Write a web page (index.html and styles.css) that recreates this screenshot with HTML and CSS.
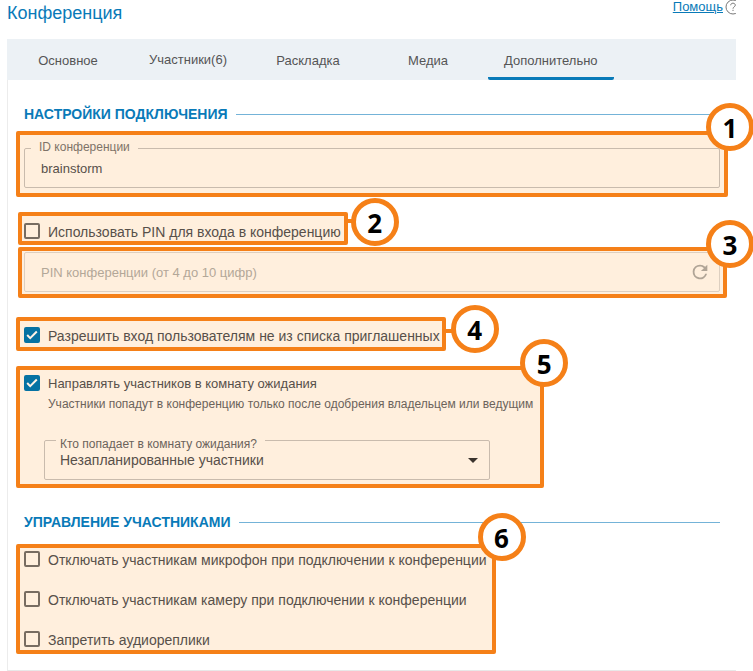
FILE: index.html
```html
<!DOCTYPE html>
<html lang="ru">
<head>
<meta charset="utf-8">
<meta name="viewport" content="width=device-width, initial-scale=1">
<title>Конференция</title>
<link rel="stylesheet" href="styles.css">
</head>
<body>
<div class="page">
  <header class="header">
    <h1 class="title">Конференция</h1>
    <div class="help">
      <a href="#help">Помощь</a>
      <span class="help-clip"><svg class="help-icon" viewBox="0 0 16 16" aria-hidden="true"><circle cx="8" cy="7" r="7"/><path d="M5.700 5.300C5.700 3.900 6.700 3.200 8 3.200s2.300.8 2.300 2C10.300 6.800 8 6.900 8 8.700M8 9.800V11"/></svg></span>
    </div>
  </header>

  <nav class="tabs">
    <button type="button" class="tab">Основное</button>
    <button type="button" class="tab tab-count">Участники(6)</button>
    <button type="button" class="tab">Раскладка</button>
    <button type="button" class="tab">Медиа</button>
    <button type="button" class="tab active">Дополнительно</button>
  </nav>

  <main class="panel">
    <h2 class="section first">НАСТРОЙКИ ПОДКЛЮЧЕНИЯ</h2>

    <div class="callout id-box">
      <fieldset class="field">
        <legend><label for="conf-id">ID конференции</label></legend>
        <input id="conf-id" class="text" type="text" value="brainstorm">
      </fieldset>
      <span class="badge">1</span>
    </div>

    <div class="callout pin-toggle linked">
      <label class="check"><input type="checkbox"><span>Использовать PIN для входа в конференцию</span></label>
      <span class="badge">2</span>
    </div>

    <div class="callout pin-box">
      <div class="pin-field">
        <input class="text" type="text" aria-label="PIN конференции" placeholder="PIN конференции (от 4 до 10 цифр)">
        <button type="button" class="refresh" aria-label="Обновить PIN"><svg viewBox="0 0 24 24" aria-hidden="true"><path d="M17.650 6.350A7.960 7.960 0 0 0 12 4a8 8 0 1 0 7.730 10h-2.080A6 6 0 1 1 12 6c1.660 0 3.140.690 4.220 1.780L13 11h7V4z"/></svg></button>
      </div>
      <span class="badge">3</span>
    </div>

    <div class="callout guests linked">
      <label class="check"><input type="checkbox" checked><span>Разрешить вход пользователям не из списка приглашенных</span></label>
      <span class="badge">4</span>
    </div>

    <div class="callout waiting">
      <label class="check small"><input type="checkbox" checked><span>Направлять участников в комнату ожидания</span></label>
      <p class="hint">Участники попадут в конференцию только после одобрения владельцем или ведущим</p>
      <fieldset class="field select-field">
        <legend><label for="who">Кто попадает в комнату ожидания?</label></legend>
        <select id="who"><option>Незапланированные участники</option></select>
        <svg class="arrow" viewBox="0 0 10 5" aria-hidden="true"><path d="M0 0h10L5 5z"/></svg>
      </fieldset>
      <span class="badge">5</span>
    </div>

    <h2 class="section second">УПРАВЛЕНИЕ УЧАСТНИКАМИ</h2>

    <div class="callout control">
      <label class="check"><input type="checkbox"><span>Отключать участникам микрофон при подключении к конференции</span></label>
      <label class="check"><input type="checkbox"><span>Отключать участникам камеру при подключении к конференции</span></label>
      <label class="check"><input type="checkbox"><span>Запретить аудиореплики</span></label>
      <span class="badge">6</span>
    </div>
  </main>
</div>
</body>
</html>
```
FILE: styles.css
```css
* { box-sizing: border-box; }

:root {
  --blue: #097ab8;
  --orange: #f58018;
  --tint: #ffefdd;
  --ink: #57504a;
  --muted: #6b635b;
  --line: #c9bbad;
}

body {
  margin: 0;
  background: #fff;
  color: var(--ink);
  font: 14px/20px "Liberation Sans", Arial, sans-serif;
  overflow-x: hidden;
}

button, input, select { font: inherit; color: inherit; }

.page { margin: 0 17px 0 7px; }

.header {
  display: flex;
  justify-content: space-between;
  align-items: flex-start;
  height: 39px;
}

.title {
  margin: 0;
  padding-top: 3px;
  color: var(--blue);
  font-size: 18px;
  font-weight: 400;
  line-height: 20px;
}

.help {
  display: flex;
  gap: 2px;
  font-size: 13px;
  line-height: 14px;
}

.help a { color: var(--blue); }

.help-clip { width: 11px; height: 16px; overflow: hidden; }

.help-icon {
  display: block;
  width: 16px;
  height: 16px;
  fill: none;
  stroke: #777;
}

.tabs {
  display: flex;
  height: 41px;
  padding-left: 1px;
  background: #ecf1f5;
}

.tab {
  min-width: 120px;
  padding: 5px 16px 0;
  border: 0;
  border-bottom: 3px solid transparent;
  background: none;
  color: #555;
  font-size: 13px;
  cursor: pointer;
}

.tab-count { padding-top: 3px; }

.tab.active {
  border-bottom-color: var(--blue);
  border-radius: 0 0 2px 2px;
}

.panel {
  padding: 24px 8px 16px;
  border-left: 1px solid #ececec;
  border-bottom: 1px solid #e8e8e8;
}

.section {
  display: flex;
  align-items: center;
  gap: 8px;
  margin: 0 8px;
  color: var(--blue);
  font-size: 14px;
  line-height: 20px;
}

.section::after {
  content: "";
  flex: 1;
  height: 1px;
  background: #74b3d8;
}

.section.first { margin-bottom: 7px; }
.section.second { margin-top: 24px; margin-bottom: 12px; }

.callout {
  position: relative;
  border: 4px solid var(--orange);
  border-radius: 2px;
  background: var(--tint);
}

.badge {
  position: absolute;
  z-index: 1;
  width: 48px;
  height: 48px;
  border: 5px solid var(--orange);
  border-radius: 50%;
  background: #fff;
  color: #000;
  font: 700 26px/40px "Open Sans", "Noto Sans", sans-serif;
  text-align: center;
}

.linked::after {
  content: "";
  position: absolute;
  left: 100%;
  width: 14px;
  height: 4px;
  background: var(--orange);
}

.id-box { padding: 5px 4px; }
.id-box .badge { top: -32px; right: -30px; }

.pin-toggle {
  width: fit-content;
  margin: 15px 0 2px 2px;
  padding: 5px 3px 0 2px;
}
.pin-toggle::after { top: 3px; }
.pin-toggle .badge { top: -18px; right: -55px; }

.pin-box { margin: 0 1px 19px 2px; padding: 1px 3px 2px 2px; }
.pin-box .badge { top: -31px; right: -31px; }

.guests {
  width: fit-content;
  margin-bottom: 15px;
  padding: 4px 2px 2px 4px;
}
.guests::after { top: 8px; }
.guests .badge { top: -16px; right: -57px; }

.waiting { width: fit-content; padding: 3px 7px 4px 4px; }
.waiting .badge { top: -31px; right: -28px; }

.control {
  display: flex;
  flex-direction: column;
  gap: 20px;
  width: fit-content;
  padding: 1px 5px 1px 4px;
}
.control .badge { top: -35px; right: -34px; }

.check {
  display: flex;
  align-items: center;
  gap: 8px;
}

.check span { padding-top: 2px; line-height: 18px; }

.check.small { font-size: 13px; }

.check input {
  appearance: none;
  flex: none;
  width: 16px;
  height: 16px;
  margin: 0;
  border: 2px solid #776c61;
  border-radius: 2px;
}

.check input:checked {
  border-color: #0572a3;
  background: #0572a3;
}

.check input:checked::before {
  content: "";
  display: block;
  width: 12px;
  height: 12px;
  background: #fff2e6;
  clip-path: polygon(4% 56%, 16% 44%, 35% 64%, 84% 15%, 96% 27%, 35% 87%);
}

.hint {
  margin: 3px 0 16px 24px;
  color: var(--muted);
  font-size: 12px;
  line-height: 16px;
}

.field {
  min-width: 0;
  margin: 0;
  padding: 0 6px 7px;
  border: 1px solid var(--line);
  border-radius: 2px;
}

.field legend {
  padding: 0 8px;
  color: #7e7368;
  font-size: 12px;
  line-height: 16px;
}

.id-box legend { padding-bottom: 2px; line-height: 14px; }

.text {
  display: block;
  width: 100%;
  height: 24px;
  padding: 0 10px;
  border: 0;
  outline: 0;
  background: none;
  font-size: 13px;
}

.pin-field {
  display: flex;
  align-items: center;
  height: 40px;
  padding: 0 7px 0 6px;
  border: 1px solid #ddcfc0;
  border-radius: 2px;
}

.text::placeholder { color: #b3a798; opacity: 1; }

.refresh {
  flex: none;
  width: 24px;
  height: 24px;
  padding: 1px;
  border: 0;
  background: none;
}

.refresh svg { display: block; fill: #b0a496; }

.select-field {
  position: relative;
  width: 446px;
  max-width: 100%;
  margin-left: 20px;
  padding: 0 11px 11px;
}

.select-field legend {
  padding: 8px 8px 0 4px;
  color: var(--muted);
}

.select-field select {
  appearance: none;
  display: block;
  width: 100%;
  height: 16px;
  padding: 0 4px;
  border: 0;
  outline: 0;
  background: none;
  line-height: 16px;
}

.arrow {
  position: absolute;
  right: 11px;
  bottom: 16px;
  width: 10px;
  height: 5px;
  fill: #3a332d;
  pointer-events: none;
}
```
